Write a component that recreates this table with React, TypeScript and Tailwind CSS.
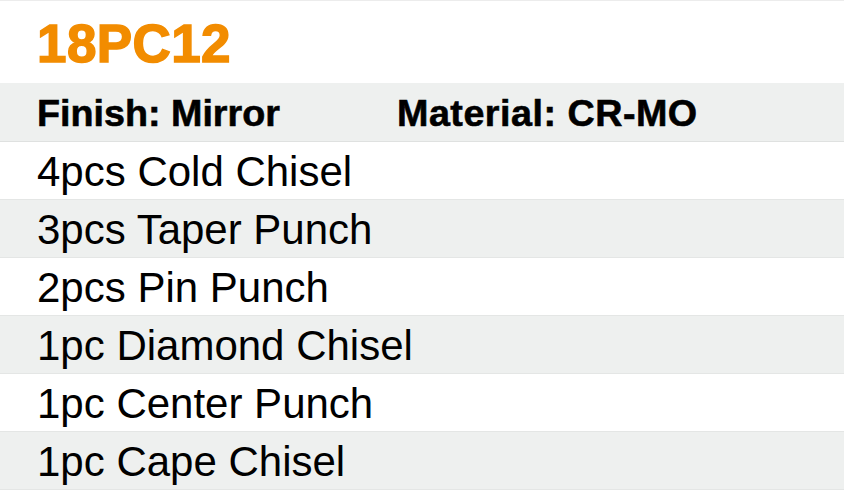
import React from 'react';

const items = [
  '4pcs Cold Chisel',
  '3pcs Taper Punch',
  '2pcs Pin Punch',
  '1pc Diamond Chisel',
  '1pc Center Punch',
  '1pc Cape Chisel',
];

export default function App() {
  return (
    <div className="w-[844px] h-[492px] bg-white font-['Liberation_Sans',Arial,sans-serif] text-black overflow-hidden">
      <div className="h-[83px] border-t border-[#ececec] flex items-center pl-[37px] pt-[2px]">
        <h1 className="text-[53px] leading-none font-bold text-[#f28c00] tracking-[0.4px] [-webkit-text-stroke:1.5px_#f28c00]">
          18PC12
        </h1>
      </div>

      <div className="h-[59px] bg-[#eef0ef] border-b border-[#dfe1e0] flex items-center pl-[37px] pt-[4px] font-bold text-[37.7px] leading-none [-webkit-text-stroke:0.6px_#000]">
        <span className="w-[360px]">Finish: Mirror</span>
        <span className="tracking-[0.5px]">Material: CR-MO</span>
      </div>

      {items.map((item, i) => (
        <div
          key={item}
          className={
            i % 2 === 0
              ? 'h-[58px] bg-white border-b border-[#e4e6e5] flex items-center pl-[37px] pt-[3px] text-[42px] leading-none'
              : 'h-[58px] bg-[#eef0ef] border-b border-[#e4e6e5] flex items-center pl-[37px] pt-[3px] text-[42px] leading-none'
          }
        >
          {item}
        </div>
      ))}
    </div>
  );
}
